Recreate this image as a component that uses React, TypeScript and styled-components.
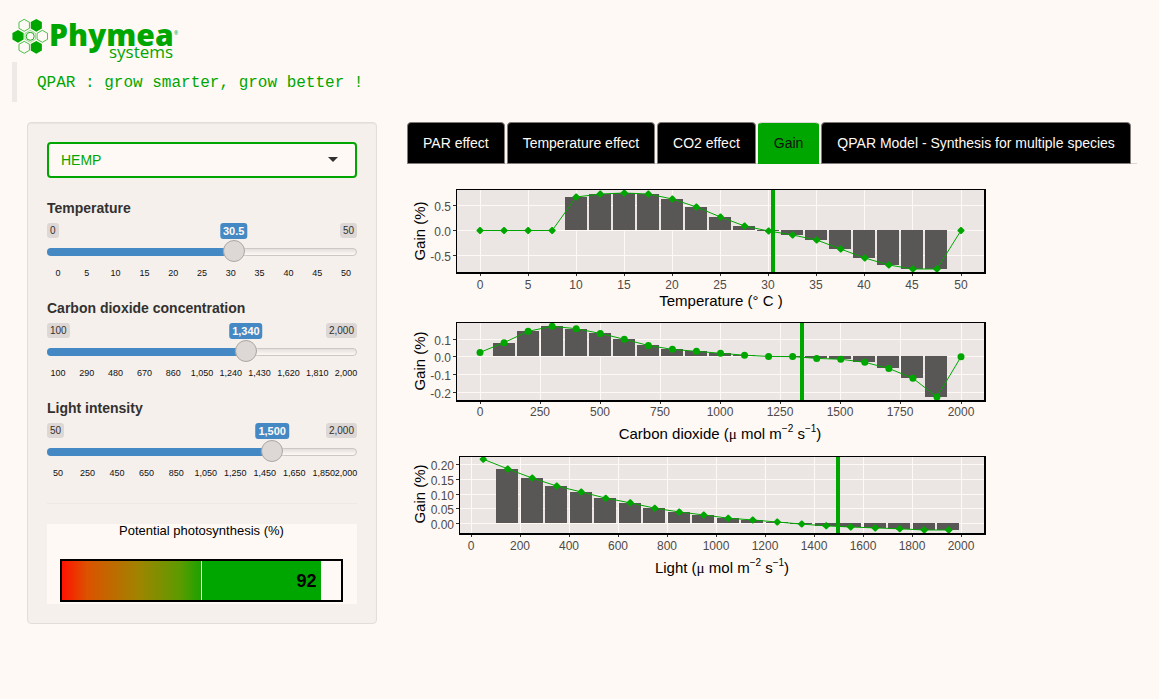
import React, { useId, useState } from "react";
import styled, { createGlobalStyle } from "styled-components";

const green = "#00a600";
const blue = "#4489c4";
const paper = "#fff9f5";
const sans = '"Liberation Sans", Arial, sans-serif';

const GlobalStyle = createGlobalStyle`
  *, *::before, *::after { box-sizing: border-box; }
  body {
    margin: 0;
    background: ${paper};
    color: #333130;
    font-family: ${sans};
    font-size: 14px;
    line-height: 20px;
  }
`;

const Page = styled.div`
  padding: 8px 7px 20px 12px;
`;

const Header = styled.header`
  margin-bottom: 20px;
`;

const LogoSvg = styled.svg`
  display: block;
  overflow: visible;
`;

const Tagline = styled.blockquote`
  margin: 0;
  padding: 11px 20px 9px;
  border-left: 5px solid #eee9e6;
  color: ${green};
  font-family: "Liberation Mono", "Courier New", monospace;
  font-size: 16px;
  line-height: 20px;
`;

const Columns = styled.div`
  display: grid;
  grid-template-columns: minmax(0, 1fr) minmax(0, 2fr);
  align-items: start;
`;

const Column = styled.div`
  padding: 0 15px;
`;

const Well = styled.form`
  padding: 19px;
  background: #f5f0ec;
  border: 1px solid #e3dedb;
  border-radius: 4px;
  box-shadow: inset 0 1px 1px rgba(0, 0, 0, 0.05);
`;

const SelectBox = styled.div`
  position: relative;
  margin-bottom: 20px;
`;

const Select = styled.select`
  display: block;
  width: 100%;
  height: 36px;
  padding: 0 12px;
  appearance: none;
  background: ${paper};
  border: 2px solid ${green};
  border-radius: 4px;
  color: ${green};
  font: 14px ${sans};
`;

const Caret = styled.span`
  position: absolute;
  right: 19px;
  top: 15px;
  border: 5px solid transparent;
  border-top-color: #333130;
  border-bottom: 0;
  pointer-events: none;
`;

const SliderGroup = styled.div`
  margin-bottom: 19px;
`;

const SliderLabel = styled.label`
  display: block;
  margin-bottom: 5px;
  font-weight: bold;
`;

const BadgeRow = styled.div`
  position: relative;
  display: flex;
  justify-content: space-between;
  height: 16px;
  margin-bottom: 1px;
`;

const Limit = styled.span`
  height: 15px;
  padding: 0 3px;
  border-radius: 3px;
  background: #ddd8d5;
  font-size: 10px;
  line-height: 15px;
`;

const Current = styled.output`
  position: absolute;
  top: 0;
  height: 16px;
  padding: 0 3px;
  border-radius: 3px;
  background: ${blue};
  color: ${paper};
  font-size: 11px;
  font-weight: bold;
  line-height: 16px;
  transform: translateX(-50%);
`;

const Rail = styled.div`
  display: grid;
  align-items: center;
  height: 22px;
  margin-bottom: 5px;
`;

const Track = styled.div`
  grid-area: 1 / 1;
  height: 8px;
  margin-top: 2px;
  border: 1px solid #ccc7c4;
  border-radius: 8px;
  background: linear-gradient(#e4dfdc, ${paper});
`;

const Fill = styled.div`
  grid-area: 1 / 1;
  height: 8px;
  margin-top: 2px;
  border-radius: 8px 0 0 8px;
  background: ${blue};
`;

const Range = styled.input`
  grid-area: 1 / 1;
  width: 100%;
  height: 22px;
  margin: 0;
  appearance: none;
  background: transparent;
  z-index: 1;

  &::-webkit-slider-thumb {
    appearance: none;
    width: 22px;
    height: 22px;
    border: 1px solid #aaa6a3;
    border-radius: 50%;
    background: #ddd8d5;
    box-shadow: 1px 1px 3px rgba(255, 249, 245, 0.3);
  }
`;

const Scale = styled.div`
  position: relative;
  height: 12px;
  margin: 0 11px;
  color: #111;
  font-size: 9px;
  line-height: 12px;
`;

const ScaleMark = styled.span`
  position: absolute;
  transform: translateX(-50%);
`;

const Rule = styled.hr`
  height: 1px;
  margin: 24px 0 20px;
  border: 0;
  background: #eee9e6;
`;

const GaugeCard = styled.figure`
  margin: 0;
  padding: 0 14px 2px 13px;
  background: ${paper};
`;

const GaugeTitle = styled.figcaption`
  margin-bottom: 21px;
  color: #000;
  font-size: 13px;
  line-height: 14px;
  text-align: center;
`;

const Gauge = styled.div`
  display: flex;
  height: 43px;
  border: 2px solid #000;
`;

const GaugeLow = styled.div`
  flex: 0 0 50%;
  border-right: 1px solid ${paper};
  background: linear-gradient(to right, #ff1200, #dc5200 18%, #a08400 55%, #5c9b00 85%, #1ca200);
`;

const GaugeHigh = styled.div`
  flex: 0 0 43%;
  padding-right: 5px;
  background: ${green};
  color: #000;
  font-size: 18px;
  font-weight: bold;
  line-height: 41px;
  text-align: right;
`;

const TabList = styled.div`
  display: flex;
  gap: 2px;
  border-bottom: 1px solid #ddd8d5;
  margin-bottom: 20px;
`;

const Tab = styled.button<{ $active: boolean }>`
  margin-bottom: -1px;
  padding: 10px 15px;
  border: 1px solid ${(p) => (p.$active ? green : "#807a78")};
  border-top-color: ${(p) => (p.$active ? "#ddd8d5" : "#807a78")};
  border-radius: 4px 4px 0 0;
  background: ${(p) => (p.$active ? green : "#000")};
  color: ${(p) => (p.$active ? "#111" : paper)};
  font: 14px/20px ${sans};
  white-space: nowrap;
  cursor: pointer;
`;

const Charts = styled.div`
  max-width: 586px;
`;

const ChartSvg = styled.svg`
  display: block;
  width: 100%;
  height: auto;
  font-family: ${sans};
`;

const TickText = styled.text`
  fill: #4d4a49;
  font-size: 12px;
`;

const AxisText = styled.text`
  fill: #000;
  font-size: 15px;
`;

type SliderProps = {
  label: string;
  min: number;
  max: number;
  step: number;
  marks: number[];
  value: number;
  onChange: (value: number) => void;
};

const fmt = (n: number) => n.toLocaleString("en-US");

function Slider({ label, min, max, step, marks, value, onChange }: SliderProps) {
  const id = useId();
  const ratio = (value - min) / (max - min);
  const center = `calc(11px + (100% - 22px) * ${ratio})`;
  return (
    <SliderGroup>
      <SliderLabel htmlFor={id}>{label}</SliderLabel>
      <BadgeRow>
        <Limit>{fmt(min)}</Limit>
        <Limit>{fmt(max)}</Limit>
        <Current htmlFor={id} style={{ left: center }}>{fmt(value)}</Current>
      </BadgeRow>
      <Rail>
        <Track />
        <Fill style={{ width: center }} />
        <Range
          id={id}
          type="range"
          min={min}
          max={max}
          step={step}
          value={value}
          onChange={(e) => onChange(Number(e.target.value))}
        />
      </Rail>
      <Scale>
        {marks.map((m) => (
          <ScaleMark key={m} style={{ left: `${((m - min) / (max - min)) * 100}%` }}>
            {fmt(m)}
          </ScaleMark>
        ))}
      </Scale>
    </SliderGroup>
  );
}

type ChartProps = {
  name: string;
  height: number;
  left: number;
  top: number;
  bottom: number;
  originX: number;
  scaleX: number;
  originY: number;
  scaleY: number;
  xTicks: number[];
  yTicks: string[];
  points: [number, number][];
  barWidth: number;
  skipFirstBar?: boolean;
  marker: number;
  round?: boolean;
  tickBaseline: number;
  titleBaseline: number;
  titleX: number;
  titleY: number;
  title: React.ReactNode;
};

const RIGHT = 579;

function GainChart(p: ChartProps) {
  const clip = useId();
  const px = (v: number) => p.originX + v * p.scaleX;
  const py = (v: number) => p.originY - v * p.scaleY;
  const zero = Math.floor(py(0));
  const bars = p.skipFirstBar ? p.points.slice(1) : p.points;
  return (
    <ChartSvg viewBox={`0 0 586 ${p.height}`} role="img" aria-label={p.name}>
      <clipPath id={clip}>
        <rect x={p.left} y={p.top} width={RIGHT - p.left} height={p.bottom - p.top} />
      </clipPath>
      <rect x={p.left} y={p.top} width={RIGHT - p.left} height={p.bottom - p.top} fill="#ebe6e3" />
      <g clipPath={`url(#${clip})`}>
        <g fill={paper} shapeRendering="crispEdges">
          {p.xTicks.map((t) => (
            <rect key={t} x={Math.floor(px(t))} y={p.top} width="1" height={p.bottom - p.top} />
          ))}
          {p.yTicks.map((t) => (
            <rect key={t} x={p.left} y={Math.floor(py(Number(t)))} width={RIGHT - p.left} height="1" />
          ))}
        </g>
        <g fill="#595755" shapeRendering="crispEdges">
          {bars.filter(([, v]) => v !== 0).map(([x, v]) => (
            <rect
              key={x}
              x={Math.floor(px(x) - p.barWidth / 2)}
              y={Math.min(Math.round(py(v)), zero)}
              width={p.barWidth}
              height={Math.abs(Math.round(py(v)) - zero)}
            />
          ))}
        </g>
        <polyline
          points={p.points.map(([x, v]) => `${px(x)},${py(v)}`).join(" ")}
          fill="none"
          stroke={green}
          strokeWidth="1"
        />
        <g fill={green}>
          {p.points.map(([x, v]) =>
            p.round ? (
              <circle key={x} cx={px(x)} cy={py(v)} r="3.5" />
            ) : (
              <path
                key={x}
                d={`M${px(x) - 0.5} ${py(v) - 3.5}h1l3 3v1l-3 3h-1l-3-3v-1z`}
              />
            )
          )}
        </g>
        <rect x={Math.floor(px(p.marker)) - 2} y={p.top} width="4" height={p.bottom - p.top} fill={green} />
      </g>
      <path
        d={`M${p.left} ${p.top}H${RIGHT}V${p.bottom}H${p.left}zm1 1V${p.bottom - 2}H${RIGHT - 2}V${p.top + 1}z`}
        fill="#000"
        fillRule="evenodd"
      />
      <g fill="#333130" shapeRendering="crispEdges">
        {p.xTicks.map((t) => (
          <rect key={t} x={Math.floor(px(t))} y={p.bottom} width="1" height="2" />
        ))}
        {p.yTicks.map((t) => (
          <rect key={t} x={p.left - 3} y={Math.floor(py(Number(t)))} width="3" height="1" />
        ))}
      </g>
      {p.xTicks.map((t) => (
        <TickText key={t} x={Math.floor(px(t))} y={p.tickBaseline} textAnchor="middle">{t}</TickText>
      ))}
      {p.yTicks.map((t) => (
        <TickText key={t} x={p.left - 5} y={Math.floor(py(Number(t))) + 6} textAnchor="end">{t}</TickText>
      ))}
      <AxisText transform={`translate(18 ${p.titleY}) rotate(-90)`} textAnchor="middle">Gain (%)</AxisText>
      <AxisText x={p.titleX} y={p.titleBaseline} textAnchor="middle">{p.title}</AxisText>
    </ChartSvg>
  );
}

function Flux({ name }: { name: string }) {
  return (
    <>
      {name} (<tspan fontFamily="Liberation Serif, serif">μ</tspan> mol m
      <tspan fontSize="10" dy="-7">−2</tspan>
      <tspan dy="7"> s</tspan>
      <tspan fontSize="10" dy="-7">−1</tspan>
      <tspan dy="7">)</tspan>
    </>
  );
}

const zip = (start: number, step: number, values: number[]): [number, number][] =>
  values.map((v, i) => [start + i * step, v]);

const temperatureGain = zip(0, 2.5, [
  0, 0, 0, 0, 0.67, 0.73, 0.75, 0.73, 0.63, 0.47, 0.27, 0.09, -0.01, -0.09, -0.19, -0.37, -0.55,
  -0.69, -0.77, -0.77, 0,
]);
const carbonGain = zip(0, 100, [
  0.025, 0.08, 0.144, 0.172, 0.159, 0.132, 0.099, 0.064, 0.042, 0.031, 0.02, 0.009, 0.002, 0.001,
  -0.009, -0.014, -0.031, -0.066, -0.121, -0.227, 0,
]);
const lightGain = zip(50, 100, [
  0.218, 0.185, 0.154, 0.127, 0.107, 0.086, 0.07, 0.052, 0.039, 0.029, 0.018, 0.012, 0.005, -0.002,
  -0.008, -0.012, -0.015, -0.018, -0.022, -0.022,
]);

const hexagon = (cx: number, cy: number, r: number) => {
  const w = r * 0.87;
  return `M${cx} ${cy - r}L${cx + w} ${cy - r / 2}V${cy + r / 2}L${cx} ${cy + r}L${cx - w} ${cy + r / 2}V${cy - r / 2}z`;
};

function Logo() {
  return (
    <LogoSvg width="170" height="54" viewBox="0 -10 170 54" role="img" aria-label="Phymea systems">
      <g fill={green}>
        <path d={hexagon(24.3, 7.3, 6.4)} />
        <path d={hexagon(6, 18.3, 6.4)} />
        <path d={hexagon(24.3, 29.3, 6.4)} />
      </g>
      <g fill="none" stroke={green} strokeWidth="0.7">
        <path d={hexagon(12.2, 7.3, 6)} />
        <path d={hexagon(30.3, 18.3, 6)} />
        <path d={hexagon(12.2, 29.3, 6)} />
        <path d={hexagon(18.2, 18.3, 6)} strokeWidth="0.4" />
        <circle cx="18.2" cy="18.3" r="4" strokeWidth="0.9" />
      </g>
      <text x="37" y="28" fill={green} fontFamily="Open Sans, sans-serif" fontWeight="800" fontSize="30">Phymea</text>
      <text x="97" y="40" fill={green} fontFamily="Open Sans, sans-serif" fontSize="17">systems</text>
      <text x="162" y="17" fill={green} fontFamily="Open Sans, sans-serif" fontSize="5">®</text>
    </LogoSvg>
  );
}

const tabs = [
  "PAR effect",
  "Temperature effect",
  "CO2 effect",
  "Gain",
  "QPAR Model - Synthesis for multiple species",
];

export default function App() {
  const [tab, setTab] = useState("Gain");
  const [temperature, setTemperature] = useState(30.5);
  const [carbon, setCarbon] = useState(1340);
  const [light, setLight] = useState(1500);

  return (
    <>
      <GlobalStyle />
      <Page>
        <Header>
          <Logo />
          <Tagline>QPAR : grow smarter, grow better !</Tagline>
        </Header>
        <Columns>
          <Column>
            <Well>
              <SelectBox>
                <Select aria-label="Species" defaultValue="HEMP">
                  <option>HEMP</option>
                </Select>
                <Caret />
              </SelectBox>
              <Slider
                label="Temperature"
                min={0}
                max={50}
                step={0.5}
                marks={[0, 5, 10, 15, 20, 25, 30, 35, 40, 45, 50]}
                value={temperature}
                onChange={setTemperature}
              />
              <Slider
                label="Carbon dioxide concentration"
                min={100}
                max={2000}
                step={10}
                marks={[100, 290, 480, 670, 860, 1050, 1240, 1430, 1620, 1810, 2000]}
                value={carbon}
                onChange={setCarbon}
              />
              <Slider
                label="Light intensity"
                min={50}
                max={2000}
                step={10}
                marks={[50, 250, 450, 650, 850, 1050, 1250, 1450, 1650, 1850, 2000]}
                value={light}
                onChange={setLight}
              />
              <Rule />
              <GaugeCard>
                <GaugeTitle>Potential photosynthesis (%)</GaugeTitle>
                <Gauge>
                  <GaugeLow />
                  <GaugeHigh>92</GaugeHigh>
                </Gauge>
              </GaugeCard>
            </Well>
          </Column>
          <Column as="main">
            <TabList role="tablist">
              {tabs.map((t) => (
                <Tab key={t} type="button" role="tab" aria-selected={t === tab} $active={t === tab} onClick={() => setTab(t)}>
                  {t}
                </Tab>
              ))}
            </TabList>
            <Charts>
              <GainChart
                name="Gain by temperature"
                height={133}
                left={49}
                top={5}
                bottom={90}
                originX={73}
                scaleX={9.62}
                originY={46.5}
                scaleY={50}
                xTicks={[0, 5, 10, 15, 20, 25, 30, 35, 40, 45, 50]}
                yTicks={["0.5", "0.0", "-0.5"]}
                points={temperatureGain}
                barWidth={22}
                marker={temperature}
                tickBaseline={105}
                titleBaseline={122}
                titleX={314}
                titleY={47}
                title="Temperature (° C )"
              />
              <GainChart
                name="Gain by carbon dioxide"
                height={133}
                left={49}
                top={5}
                bottom={85}
                originX={73}
                scaleX={0.2405}
                originY={39.8}
                scaleY={177}
                xTicks={[0, 250, 500, 750, 1000, 1250, 1500, 1750, 2000]}
                yTicks={["0.1", "0.0", "-0.1", "-0.2"]}
                points={carbonGain}
                barWidth={22}
                skipFirstBar
                marker={carbon}
                round
                tickBaseline={99}
                titleBaseline={122}
                titleX={313}
                titleY={44}
                title={<Flux name="Carbon dioxide" />}
              />
              <GainChart
                name="Gain by light"
                height={134}
                left={52}
                top={6}
                bottom={85}
                originX={64}
                scaleX={0.245}
                originY={73.5}
                scaleY={295}
                xTicks={[0, 200, 400, 600, 800, 1000, 1200, 1400, 1600, 1800, 2000]}
                yTicks={["0.20", "0.15", "0.10", "0.05", "0.00"]}
                points={lightGain}
                barWidth={22}
                skipFirstBar
                marker={light}
                tickBaseline={100}
                titleBaseline={123}
                titleX={315}
                titleY={44}
                title={<Flux name="Light" />}
              />
            </Charts>
          </Column>
        </Columns>
      </Page>
    </>
  );
}
